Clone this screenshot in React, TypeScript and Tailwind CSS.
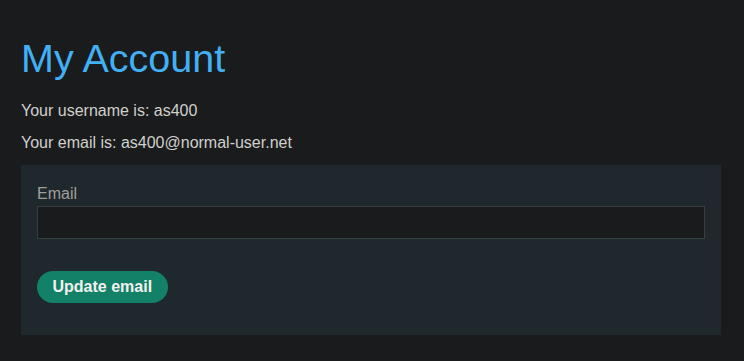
export default function App() {
  return (
    <div className="min-h-screen bg-[#1a1b1d] font-['Liberation_Sans',Arial,sans-serif] text-[#d0d0cc]">
      <div className="w-[700px] pl-[21px] pt-[35px] box-content">
        <h1 className="text-[39.5px] leading-[46px] text-[#42b0f5]">My Account</h1>
        <p className="mt-[20px] text-[16px] leading-[20px]">Your username is: as400</p>
        <p className="mt-[12px] text-[16px] leading-[20px]">Your email is: as400@normal-user.net</p>
        <form
          className="mt-[12px] bg-[#1e282d] px-[16px] pt-[19px] pb-[32px]"
          onSubmit={(e) => e.preventDefault()}
        >
          <label className="block text-[16px] leading-[20px] text-[#a09f98]">Email</label>
          <input
            type="email"
            className="mt-[2px] block h-[33px] w-full border border-[#393e40] bg-[#1a1b1d] px-2 text-[#d0d0cc] outline-none"
          />
          <button
            type="submit"
            className="mt-[32px] h-[32px] rounded-full bg-[#138068] px-[15.5px] text-[16px] font-bold text-[#f2f2ee]"
          >
            Update email
          </button>
        </form>
      </div>
    </div>
  );
}
